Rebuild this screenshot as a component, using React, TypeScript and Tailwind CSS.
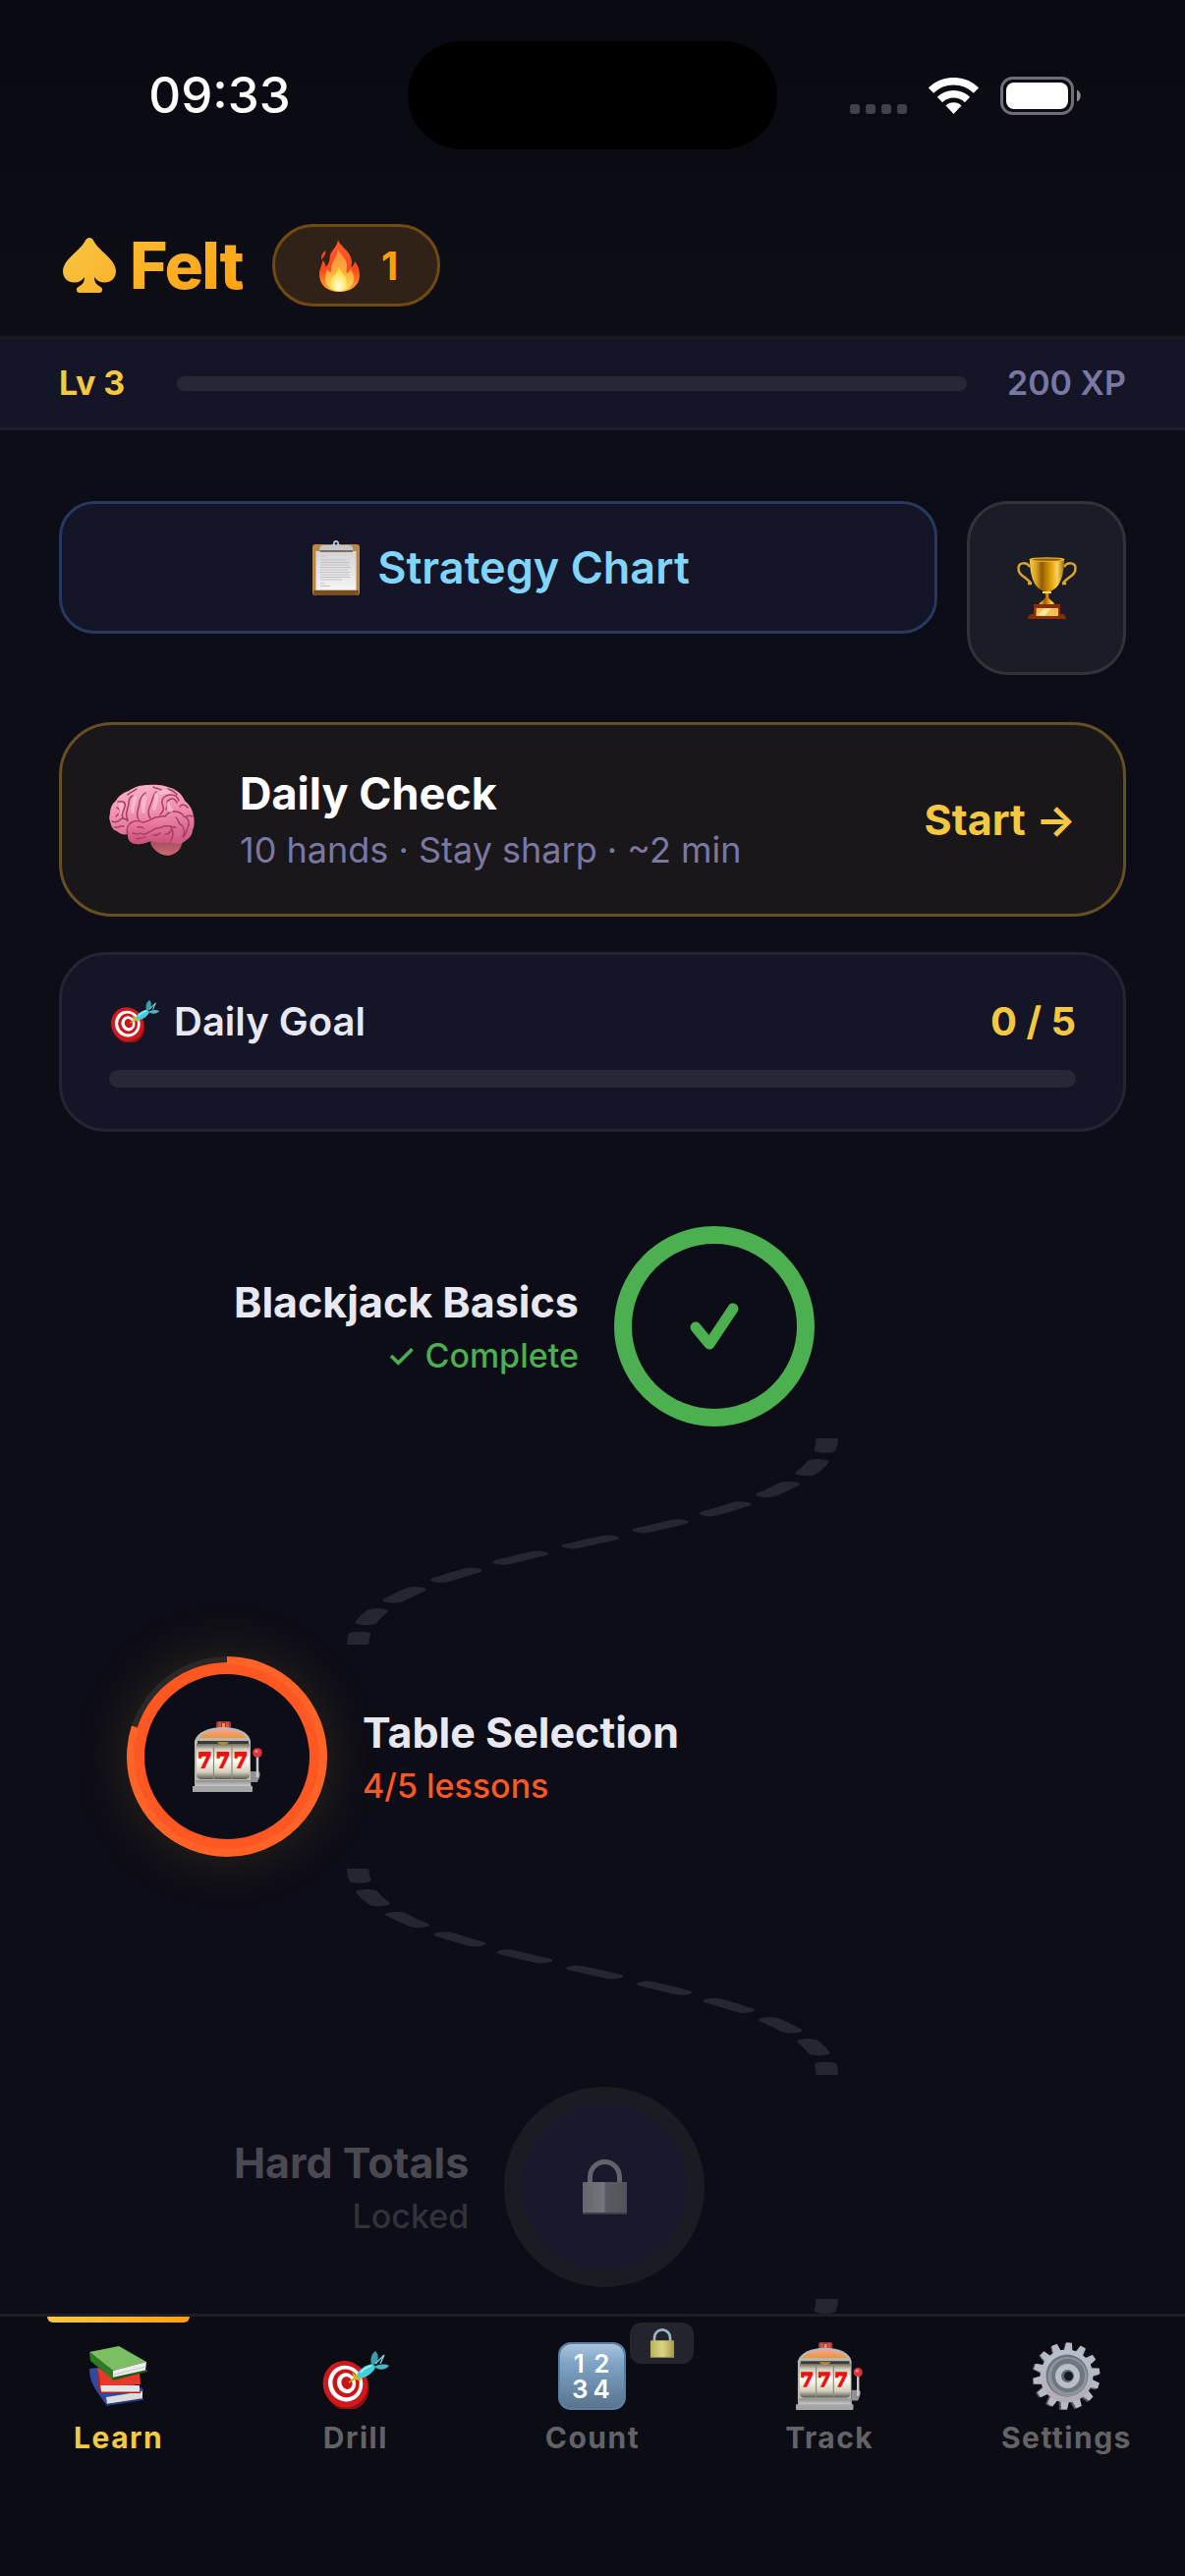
import { useState } from "react";
import type { ReactNode } from "react";
import clsx from "clsx";

type IconProps = { className?: string };

function SpadeIcon({ className }: IconProps) {
  return (
    <svg viewBox="0 0 54 56" className={className} aria-hidden="true">
      <defs>
        <linearGradient id="spade" x1="0" y1="0" x2="1" y2="1">
          <stop offset="0" stopColor="#f5c842" />
          <stop offset="1" stopColor="#fdb02a" />
        </linearGradient>
      </defs>
      <path
        fill="url(#spade)"
        d="M27 0c-2 0-3.500 1.500-4.500 3.500C18 13 0 22 0 34c0 7 5 11.500 11.500 11.500 5 0 8.500-2 10.500-5.500 0 5-2 7.500-5.500 9.500C14 51 14 51.500 14 53c0 2 1 3 3 3h20c2 0 3-1 3-3 0-1.500 0-2-2.500-3.500C34 47.500 32 45 32 40c2 3.500 5.500 5.500 10.500 5.500C49 45.500 54 41 54 34 54 22 36 13 31.500 3.500 30.500 1.500 29 0 27 0z"
      />
    </svg>
  );
}

function FlameIcon({ className }: IconProps) {
  return (
    <svg viewBox="0 0 41 53" className={className} aria-hidden="true">
      <defs>
        <linearGradient id="flame-out" x1="0" y1="0" x2="0" y2="1">
          <stop offset="0" stopColor="#ff5a2c" />
          <stop offset="0.6" stopColor="#fb4a1e" />
          <stop offset="1" stopColor="#ffb02e" />
        </linearGradient>
        <linearGradient id="flame-mid" x1="0" y1="0" x2="0" y2="1">
          <stop offset="0" stopColor="#ff8a3c" />
          <stop offset="0.6" stopColor="#ffb23c" />
          <stop offset="1" stopColor="#ffe25a" />
        </linearGradient>
        <radialGradient id="flame-in" cx="0.5" cy="0.8" r="0.6">
          <stop offset="0" stopColor="#fffde0" />
          <stop offset="1" stopColor="#ffe04a" />
        </radialGradient>
      </defs>
      <path
        fill="url(#flame-out)"
        d="M19 0c1 6 14 12 14 23 0 2-.5 4-.5 5 2-1 3-3 3.500-6 3 4 5 8 5 14 0 10-8 17-20.500 17S0 46 0 35c0-6 3-9 3.500-14 1.500 1.500 3 4 3 7 1-1 4-5 4-9 0-8 8-11 8.500-19z"
      />
      <path fill="#f2402a" d="M6 11c2 5-3 6-3.500 10C1.500 17 2 14 6 11z" />
      <path
        fill="url(#flame-mid)"
        d="M19 9c2 6 9 10 9 18 0 3-1 5 0 7 2-1 3-2 4-4 2 3 3 6 3 9 0 8-6 13.500-14.500 13.500S6 47 6 39c0-4 1-6 2-9 1 2 2 3 4 3-1-10 6-13 7-24z"
      />
      <path fill="url(#flame-in)" d="M20 28c1 5 8 8 8 16 0 5-3 8.500-8 8.500s-8.500-3.500-8.500-8.500c0-7 7-9 8.500-16z" />
    </svg>
  );
}

function ClipboardIcon({ className }: IconProps) {
  return (
    <svg viewBox="0 0 48 56" className={className} aria-hidden="true">
      <defs>
        <linearGradient id="paper" x1="0" y1="0" x2="0" y2="1">
          <stop offset="0" stopColor="#d4d4d6" />
          <stop offset="1" stopColor="#f4f4f4" />
        </linearGradient>
      </defs>
      <rect y="4" width="48" height="52" rx="3" fill="#b98847" />
      <path d="M1 51h46v2a3 3 0 0 1-3 3H4a3 3 0 0 1-3-3z" fill="#7a4f20" />
      <rect x="3.500" y="11" width="41" height="39.500" fill="url(#paper)" />
      <g stroke="#c2c2c6" strokeWidth="1">
        <path d="M8 16h6M8 20h26M8 22.500h30M8 25h29M8 27.500h31M8 30h28M8 32.500h30M8 35h29M8 37.500h30M8 40h22M8 44h5M8 46.500h10" />
      </g>
      <path d="M7.500 11V7.500C7.500 6 9 5 11 5h8c1 0 2-1 2-2 0-2 1.500-3 3-3s3 1 3 3c0 1 1 2 2 2h8c2 0 4 1 4 2.500V11z" fill="#c3c7cd" />
      <path d="M7.500 10h33.500v2H7.500z" fill="#7b6f62" />
      <circle cx="24" cy="3.200" r="1.300" fill="#1b1d2c" />
    </svg>
  );
}

function TrophyIcon({ className }: IconProps) {
  return (
    <svg viewBox="0 0 61 63" className={className} aria-hidden="true">
      <defs>
        <linearGradient id="cup">
          <stop offset="0" stopColor="#f6cc4c" />
          <stop offset="0.2" stopColor="#d99c1c" />
          <stop offset="0.35" stopColor="#8f5c06" />
          <stop offset="0.6" stopColor="#e09a06" />
          <stop offset="0.8" stopColor="#f9d45a" />
          <stop offset="1" stopColor="#a86c08" />
        </linearGradient>
      </defs>
      <g fill="none" stroke="#dca62c" strokeWidth="2.500">
        <path d="M13 10C10 5 2 5 1.500 11c-.5 8 8 9 13 16M11 27h4" />
        <path d="M48 10c3-5 11-5 11.500 1 .5 8-8 9-13 16M50 27h-4" />
      </g>
      <path d="M13 2c0 14 3 30 15 33h5C45 32 48 16 48 2z" fill="url(#cup)" />
      <ellipse cx="30.500" cy="2.500" rx="18" ry="2.300" fill="#edb838" />
      <ellipse cx="30.500" cy="2.600" rx="15" ry="1.200" fill="#8f5c08" />
      <path d="M28 34h5l-1 6c0 4 6 5 7 9H22c1-4 7-5 7-9z" fill="url(#cup)" />
      <path d="M26 35h9v2h-9z" fill="#ffd95c" />
      <path d="M17 48h27v10h2c2 0 4 2 4 5H11c0-3 2-5 4-5h2z" fill="#8a2c08" />
      <path d="M19.500 52h22.500v8H19.500z" fill="#f3c254" />
      <path d="M21 59l7-7h7l-7 8z" fill="#ffe79a" />
    </svg>
  );
}

function BrainIcon({ className }: IconProps) {
  return (
    <svg viewBox="0 0 88 73" className={className} aria-hidden="true">
      <defs>
        <linearGradient id="brain" x1="0.3" y1="0" x2="0.5" y2="1">
          <stop offset="0" stopColor="#f7b3c8" />
          <stop offset="0.5" stopColor="#f18cae" />
          <stop offset="1" stopColor="#cf5a86" />
        </linearGradient>
        <linearGradient id="lobe" x1="0" y1="0" x2="0" y2="1">
          <stop offset="0" stopColor="#f386a6" />
          <stop offset="1" stopColor="#c94f7a" />
        </linearGradient>
        <linearGradient id="stem" x1="0" y1="0" x2="0" y2="1">
          <stop offset="0" stopColor="#a04a5c" />
          <stop offset="1" stopColor="#cc6b72" />
        </linearGradient>
      </defs>
      <path d="M42 57c0 5 3 9 7 12 5 4 12 5 17 2 5-2 8-7 9-13z" fill="url(#stem)" />
      <path
        fill="url(#brain)"
        d="M40 1C32 1 26 3 20 7 14 9 9 13 7 17 3 20 1 25 1 30c-1 3-1 6 0 8 1 5 3 9 7 10 3 3 7 4 11 3 0 6 4 10 9 10 6 1 10-2 15-3 6 2 13 2 19 1 5 2 10 3 14 0 5-3 9-7 9-12 2-4 2-10 1-14-1-7-4-12-9-16C74 10 69 6 63 4 56 1 48 0 40 1z"
      />
      <path
        fill="url(#lobe)"
        d="M19 52c-2-4-1-9 2-11 3-3 7-4 11-3 4 2 8 2 12 0 5-3 9-4 13-5 4 1 7 5 9 10 2 6 0 12-4 16-6 1-13 1-19-1-5 1-9 4-15 3-5 0-9-3-9-9z"
      />
      <g fill="none" stroke="#a63f66" strokeWidth="1.500" strokeLinecap="round">
        <path d="M19 51c-2-5 0-10 4-12 4-2 8-2 11 0 5 0 9-3 13-5 4 0 7-2 10-1 2-3 5-5 9-5" />
        <path d="M24 50c3 1 5 2 8 0 3 2 6 1 8-1 4-1 6-4 9-4 4 0 6-3 10-2 4-1 6 2 9 1" />
        <path d="M29 44c2 0 4-1 6 1M28 56c4-2 6 0 9-2M45 52c3 1 5-1 7-2M57 51c3 0 5-1 6-4" />
        <path d="M19 36c-4-6 1-11 1-17 0-4 2-6 4-7M30 36c-4-7 1-11 1-18 1-4 3-7 6-9" />
        <path d="M42 35c-4-6-1-11 1-16 2-5 1-8 5-11M52 31c4-3 4-7 2-11-1-6 4-9 9-9 4 0 7 2 8 6" />
        <path d="M58 26c2-4-1-8 3-10 3-2 7-1 8 3M66 28c4 0 8 1 10 5 4 1 6 5 5 9M72 23c2-3 6-2 8 1" />
        <path d="M68 34c3 2 2 7 6 8 3 3 3 8 1 12M63 44c3 5 2 10 0 14M81 42c-2 4-2 8-5 12M79 33c2-1 4-1 6 0" />
        <path d="M8 24c5 2 2 7-1 9M3 38c4 2 8-1 10-3 3 0 5 1 6 3M6 44c3 1 6-2 9-1M9 18c5-1 8 0 7 5-1 4-4 7-2 11" />
        <path d="M28 5c-3 3-7 3-9 6M45 3c2 2 6 1 8 3M60 5c4 1 7 3 9 6" />
      </g>
      <g fill="none" stroke="#ffd3e0" strokeWidth="4" strokeLinecap="round" opacity="0.5">
        <path d="M26 14c0 5-3 9-2 14M36 14c0 5-2 9-1 14M48 11c1 5-1 9-2 14M13 21c-1 3-1 5-2 8M60 20c0 3 1 5 3 7M53 9c2-1 5-2 7-1" />
      </g>
    </svg>
  );
}

function TargetIcon({ className }: IconProps) {
  return (
    <svg viewBox="0 0 69 59" className={className} aria-hidden="true">
      <g transform="rotate(-22 25 34)">
        <ellipse cx="25" cy="36" rx="22.500" ry="25" fill="#8d1113" />
        <ellipse cx="24.500" cy="33.500" rx="22.500" ry="24" fill="#d0191c" />
        <ellipse cx="25" cy="33" rx="17.500" ry="18.500" fill="#fff" />
        <ellipse cx="25.500" cy="33" rx="13.500" ry="14.500" fill="#c8171a" />
        <ellipse cx="26" cy="33" rx="9.500" ry="10.500" fill="#fff" />
        <ellipse cx="26.500" cy="33" rx="5.500" ry="6.500" fill="#c8171a" />
      </g>
      <path d="M28 32l12-8" stroke="#c99b12" strokeWidth="1.600" />
      <path d="M33 24l7 5-6-1z" fill="#f0d020" stroke="#d9b40c" strokeWidth="2" />
      <path d="M36 24c3-6 9-10 17-11l2 4c-3 6-9 10-17 11z" fill="#45cfdc" />
      <path d="M51 14C49 7 52 2 55 0c3 3 4 7 1 13z" fill="#3a9ea8" />
      <path d="M54 16c5-3 11-3 15-1-3 4-9 5-14 2z" fill="#4fb4bd" />
      <path d="M55 13l9-9-4 9" stroke="#7fd0d8" strokeWidth="1.400" fill="none" />
      <path d="M40 22c3-4 7-6 11-7" stroke="#a9f3f8" strokeWidth="1.500" fill="none" />
    </svg>
  );
}

function SlotIcon({ className }: IconProps) {
  return (
    <svg viewBox="0 0 71 72" className={className} aria-hidden="true">
      <defs>
        <linearGradient id="reel" x1="0" y1="0" x2="0" y2="1">
          <stop offset="0" stopColor="#6f6c5e" />
          <stop offset="0.15" stopColor="#cfccba" />
          <stop offset="0.45" stopColor="#fffef2" />
          <stop offset="0.8" stopColor="#d2cfbe" />
          <stop offset="1" stopColor="#5c594c" />
        </linearGradient>
        <linearGradient id="dome" x1="0" y1="0" x2="0" y2="1">
          <stop offset="0" stopColor="#ff9d90" />
          <stop offset="1" stopColor="#e69a35" />
        </linearGradient>
        <linearGradient id="slot-base" x1="0" y1="0" x2="0" y2="1">
          <stop offset="0" stopColor="#8c8c8c" />
          <stop offset="0.5" stopColor="#c9c9c9" />
          <stop offset="1" stopColor="#808080" />
        </linearGradient>
      </defs>
      <rect x="24" width="15" height="8" rx="2" fill="#8f3f42" />
      <rect x="26" y="1" width="3" height="6" fill="#d8504a" />
      <rect x="34" y="1" width="3" height="6" fill="#d8504a" />
      <rect x="30" y="2" width="3" height="5" fill="#ff8a3c" />
      <path d="M2 20C5 11 16 6 31 6s26 5 28 14v44H2z" fill="#b9b9b7" />
      <path d="M6 17c5-6 14-8.500 25-8.500S51 11 55 17z" fill="url(#dome)" />
      <path d="M5 20h52v3H5z" fill="#3b3a36" />
      <path d="M4 23h54v33c-2 3-4 3-6 3H10c-2 0-4 0-6-3z" fill="url(#reel)" />
      <path d="M25 21h12c-2 4-10 4-12 0z" fill="#b48a34" />
      <path d="M21.500 24v35M40 24v35" stroke="#8d8a7c" strokeWidth="1.200" />
      <g
        fill="#ee1111"
        stroke="#ee1111"
        strokeWidth="1.800"
        fontFamily="'DejaVu Serif', serif"
        fontWeight="700"
        fontSize="20"
        textAnchor="middle"
      >
        <text x="12.500" y="47">7</text>
        <text x="31" y="47">7</text>
        <text x="49" y="47">7</text>
      </g>
      <path d="M3 60h56l1 12H1z" fill="url(#slot-base)" />
      <path d="M0 66h61v5c0 1-1 1-1 1H1c-1 0-1 0-1-1z" fill="#a5a7a7" />
      <path d="M59 51h7c3 0 3 3 2 6l-2 5h-7z" fill="#8f9292" />
      <path d="M66 32v25" stroke="#c9c9cb" strokeWidth="2.500" />
      <circle cx="66" cy="32" r="4.800" fill="#e0343c" />
      <circle cx="65" cy="30.500" r="1.500" fill="#ff8d92" />
    </svg>
  );
}

function LockIcon({ className, muted }: IconProps & { muted?: boolean }) {
  return (
    <svg viewBox="0 0 45 56" className={className} aria-hidden="true">
      <defs>
        <linearGradient id="lock-gold">
          <stop offset="0" stopColor="#b7b05a" />
          <stop offset="0.5" stopColor="#dcd684" />
          <stop offset="1" stopColor="#a39a48" />
        </linearGradient>
        <linearGradient id="lock-grey">
          <stop offset="0" stopColor="#66666f" />
          <stop offset="0.48" stopColor="#75757d" />
          <stop offset="0.52" stopColor="#5b5b64" />
          <stop offset="1" stopColor="#53535c" />
        </linearGradient>
      </defs>
      <path
        d="M7.500 26V18a15 15.500 0 0 1 30 0v8"
        fill="none"
        stroke={muted ? "#63636c" : "#9db4c8"}
        strokeWidth="5"
      />
      <rect y="23" width="45" height="33" rx="1" fill={muted ? "url(#lock-grey)" : "url(#lock-gold)"} />
      <path d="M0 54h45v2H0z" fill={muted ? "#3c3c48" : "#8b8340"} />
    </svg>
  );
}

function BooksIcon({ className }: IconProps) {
  return (
    <svg viewBox="0 0 59 61" className={className} aria-hidden="true">
      <path d="M0 23l8-1 46 21 1 3-38 14C10 48 0 40 0 23z" fill="#2f4a9e" />
      <path d="M17 52l37-6v8l-36 5z" fill="#dcdcdc" />
      <path d="M17 59l38-6v2l-38 6z" fill="#23397f" />
      <path d="M8 22l20 8 23-4 1 13-42 2z" fill="#e8382a" />
      <path d="M10 40h41v7H11z" fill="#e4e4e4" />
      <path d="M8 22l2 26h42v-1.500H12L10 30z" fill="#b32018" />
      <path d="M0 6L30 0l28 16-34 9z" fill="#7cbf63" />
      <path d="M0 6l24 19v9L1 15z" fill="#2f7d22" />
      <path d="M24 25l34-9-1 9-33 8z" fill="#ececec" />
      <path d="M23 32l36-8v2l-35 9z" fill="#1f5e17" />
      <path d="M25 29l32-8" stroke="#bdbdbd" strokeWidth="0.800" />
    </svg>
  );
}

function NumbersIcon({ className }: IconProps) {
  return (
    <svg viewBox="0 0 69 69" className={className} aria-hidden="true">
      <defs>
        <linearGradient id="tile" x1="0" y1="0" x2="0" y2="1">
          <stop offset="0" stopColor="#a9c3dc" />
          <stop offset="0.3" stopColor="#7fa4c6" />
          <stop offset="1" stopColor="#58748e" />
        </linearGradient>
      </defs>
      <rect width="69" height="69" rx="13" fill="#5d7f9f" />
      <rect x="2" y="2" width="65" height="65" rx="12" fill="url(#tile)" />
      <g fill="#fff" fontFamily="Inter, sans-serif" fontWeight="600" fontSize="26" textAnchor="middle">
        <text x="22" y="31">1</text>
        <text x="45" y="31">2</text>
        <text x="23" y="57">3</text>
        <text x="45" y="57">4</text>
      </g>
    </svg>
  );
}

const TEETH = Array.from({ length: 14 }, (_, i) => i * (360 / 14) + 5);

function GearIcon({ className }: IconProps) {
  return (
    <svg viewBox="0 0 69 69" className={className} aria-hidden="true">
      <defs>
        <linearGradient id="gear" x1="0" y1="0" x2="0" y2="1">
          <stop offset="0" stopColor="#b5c3cf" />
          <stop offset="1" stopColor="#b3abb5" />
        </linearGradient>
      </defs>
      {TEETH.map((deg) => (
        <path key={deg} d="M29.500 11l1.500-10.500h6L38.500 11z" fill="#5d5754" transform={`translate(-1 .8) rotate(${deg} 34 34.500)`} />
      ))}
      {TEETH.map((deg) => (
        <path key={deg} d="M29.500 11l1.500-10.500h6L38.500 11z" fill="#b5bac4" transform={`rotate(${deg} 34.500 34.500)`} />
      ))}
      <circle cx="34.500" cy="34.500" r="27" fill="url(#gear)" />
      <circle cx="35" cy="34" r="21.500" fill="#6f767d" />
      <circle cx="35.500" cy="35" r="20" fill="#8d949b" />
      <circle cx="36" cy="34" r="17" fill="#70767d" />
      <circle cx="35.500" cy="34.500" r="12.500" fill="#b9bfc9" />
      <circle cx="35.500" cy="34.500" r="6.500" fill="#5d646c" />
      <circle cx="36.500" cy="34.500" r="4.500" fill="#16171f" />
    </svg>
  );
}

function StatusBar() {
  return (
    <div className="grid grid-cols-[1fr_376px_1fr] items-center pt-[42px]">
      <div className="pl-8 text-center text-[51px] leading-[60px] font-medium text-white">09:33</div>
      <div className="h-[110px] rounded-full bg-black" />
      <div className="flex items-center justify-center gap-[22px] pr-8">
        <svg viewBox="0 0 58 39" className="h-[39px] w-[58px]" aria-hidden="true">
          <g fill="#414148">
            <rect y="28" width="10" height="10" rx="3" />
            <rect x="16" y="28" width="10" height="10" rx="3" />
            <rect x="32" y="28" width="10" height="10" rx="3" />
            <rect x="48" y="28" width="10" height="10" rx="3" />
          </g>
        </svg>
        <svg viewBox="0 0 51 37" className="h-[37px] w-[51px]" aria-hidden="true">
          <g fill="none" stroke="#fff">
            <path d="M2.500 13a33 33 0 0 1 46 0" strokeWidth="7.500" />
            <path d="M11.500 22.500a20 20 0 0 1 28 0" strokeWidth="7.500" />
          </g>
          <path d="M25.500 37l-8-8.500a11.500 11.500 0 0 1 16 0z" fill="#fff" />
        </svg>
        <svg viewBox="0 0 83 39" className="h-[39px] w-[83px]" aria-hidden="true">
          <rect x="1.500" y="1.500" width="72" height="36" rx="11" fill="none" stroke="#6e6e74" strokeWidth="3" />
          <rect x="6" y="6" width="63" height="27" rx="8" fill="#fff" />
          <path d="M78 13.500c5 2 5 10 0 12z" fill="#8a8a90" />
        </svg>
      </div>
    </div>
  );
}

function Connector({ flip }: { flip?: boolean }) {
  return (
    <svg viewBox="0 0 100 70" preserveAspectRatio="none" className="h-[210px] w-full shrink-0" aria-hidden="true">
      <path
        d={flip ? "M30.200 0C30.200 35 69.800 35 69.800 70" : "M69.800 0C69.800 35 30.200 35 30.200 70"}
        fill="none"
        stroke="#262630"
        strokeWidth="1.850"
        strokeDasharray="4 4"
        strokeLinecap="round"
      />
    </svg>
  );
}

function LessonText({ title, note, className, right }: { title: string; note: ReactNode; className: string; right?: boolean }) {
  return (
    <span className={clsx("flex flex-col gap-2", right ? "items-end" : "items-start", className)}>
      <span className="text-[43px] leading-[51px] font-bold">{title}</span>
      {note}
    </span>
  );
}

const TABS = [
  { id: "learn", label: "Learn", icon: <BooksIcon className="h-[61px] w-[59px]" /> },
  { id: "drill", label: "Drill", icon: <TargetIcon className="mt-2 h-[59px] w-[69px]" /> },
  { id: "count", label: "Count", icon: <NumbersIcon className="size-[69px]" />, locked: true },
  { id: "track", label: "Track", icon: <SlotIcon className="h-[69px] w-[68px]" /> },
  { id: "settings", label: "Settings", icon: <GearIcon className="size-[69px]" /> },
];

export default function App() {
  const [tab, setTab] = useState("learn");

  return (
    <div className="flex h-screen flex-col overflow-hidden bg-[#0d0d17] font-['Inter',sans-serif]">
      <header className="shrink-0 bg-linear-to-b from-[#090912] to-[#0e0e17]">
        <StatusBar />
        <div className="flex items-center gap-[30px] border-b-3 border-[#1a1a21] px-[60px] pt-[76px] pb-[30px]">
          <h1 className="flex items-center gap-3.5 pl-1">
            <SpadeIcon className="h-[56px] w-[54px]" />
            <span className="bg-linear-to-br from-[#f9bb30] to-[#ff9f0a] bg-clip-text text-[66px] leading-[72px] font-extrabold tracking-tight text-transparent">
              Felt
            </span>
          </h1>
          <div className="flex h-[84px] items-center gap-[22px] rounded-[42px] border-3 border-[#714a12] bg-[#302216] pr-10 pl-[45px]">
            <FlameIcon className="h-[53px] w-[41px]" />
            <span className="text-[40px] leading-[51px] font-bold text-[#ff9f0a]">1</span>
          </div>
        </div>
      </header>

      <section aria-label="Level" className="flex h-[93px] shrink-0 items-center gap-9 border-b-3 border-[#1e1e31] bg-[#151528] px-[60px]">
        <span className="min-w-[84px] text-[34px] leading-[42px] font-bold text-[#f5c842]">Lv 3</span>
        <div className="h-[15px] flex-1 rounded-full bg-[#272738]" />
        <span className="min-w-[126px] text-right text-[34px] leading-[42px] font-semibold text-[#7a78a3]">200 XP</span>
      </section>

      <main className="flex min-h-0 flex-1 flex-col overflow-hidden pt-[72px]">
        <div className="flex shrink-0 flex-col px-[60px]">
          <div className="flex items-start gap-[30px]">
            <button className="flex h-[135px] flex-1 items-center justify-center gap-[18px] rounded-[36px] border-3 border-[#28395f] bg-[#151528] pl-1.5">
              <ClipboardIcon className="h-[56px] w-[48px]" />
              <span className="text-[45px] leading-[54px] font-semibold text-[#81d4fa]">Strategy Chart</span>
            </button>
            <button aria-label="Achievements" className="flex h-[177px] w-[162px] items-center justify-center rounded-[42px] border-3 border-[#32323b] bg-[#1c1c26]">
              <TrophyIcon className="h-[63px] w-[61px]" />
            </button>
          </div>

          <button className="mt-12 flex h-[198px] items-center rounded-[54px] border-3 border-[#665023] bg-[#1a171a] px-12 text-left">
            <BrainIcon className="h-[73px] w-[88px]" />
            <span className="ml-[45px] flex flex-1 flex-col gap-2">
              <span className="text-[45px] leading-[54px] font-bold text-white">Daily Check</span>
              <span className="text-[36px] leading-[44px] text-[#7a78a3]">10 hands · Stay sharp · ~2 min</span>
            </span>
            <span className="text-[43px] leading-[51px] font-bold text-[#f5c842]">Start →</span>
          </button>

          <section className="mt-9 rounded-[48px] border-3 border-[#242435] bg-[#151528] px-12 py-[42px]">
            <div className="flex items-center justify-between text-[40px] leading-[51px]">
              <h2 className="flex items-center gap-3.5 font-semibold text-[#e8e8f2]">
                <TargetIcon className="h-[43px] w-[52px]" />
                Daily Goal
              </h2>
              <span className="font-bold text-[#f5c842]">0 / 5</span>
            </div>
            <div className="mt-6 h-[18px] rounded-full bg-[#272738]" />
          </section>
        </div>

        <div className="mt-24 flex flex-col gap-3">
          <button className="flex items-center gap-9 pl-[238px]">
            <LessonText
              right
              title="Blackjack Basics"
              className="text-[#e8e8f2]"
              note={<span className="text-[34px] leading-[42px] font-medium text-[#4caf50]">✓ Complete</span>}
            />
            <span className="flex size-[204px] items-center justify-center rounded-full border-18 border-[#4caf50]">
              <svg viewBox="0 0 50 48" className="h-[48px] w-[50px]" aria-hidden="true">
                <path d="M6 25l14 17L44 6" fill="none" stroke="#4caf50" strokeWidth="11" strokeLinecap="round" strokeLinejoin="round" />
              </svg>
            </span>
          </button>

          <Connector />

          <button className="flex items-center gap-9 pl-[129px]">
            <span className="grid size-[204px] place-items-center rounded-full shadow-[0_0_60px_rgba(245,200,66,0.14)]">
              <svg viewBox="0 0 204 204" className="col-start-1 row-start-1 size-[204px]" aria-hidden="true">
                <circle cx="102" cy="102" r="99" fill="#0d0d17" stroke="#2b2828" strokeWidth="6" />
                <circle cx="102" cy="102" r="90" fill="none" stroke="#ff5722" strokeWidth="12" />
                <circle
                  cx="102"
                  cy="102"
                  r="98"
                  fill="none"
                  stroke="#ff6327"
                  strokeWidth="8"
                  pathLength="100"
                  strokeDasharray="80 20"
                  transform="rotate(-90 102 102)"
                />
              </svg>
              <SlotIcon className="col-start-1 row-start-1 h-[72px] w-[71px]" />
            </span>
            <LessonText
              title="Table Selection"
              className="text-[#e8e8f2]"
              note={<span className="text-[34px] leading-[42px] font-medium text-[#ff5722]">4/5 lessons</span>}
            />
          </button>

          <Connector flip />

          <button className="flex items-center gap-9 pl-[238px]">
            <LessonText
              right
              title="Hard Totals"
              className="text-[#494952]"
              note={<span className="text-[34px] leading-[42px] font-medium text-[#32323b]">Locked</span>}
            />
            <span className="flex size-[204px] items-center justify-center rounded-full border-18 border-[#1b1b24] bg-[#19192d]">
              <LockIcon muted className="h-[56px] w-[45px]" />
            </span>
          </button>

          <Connector />
        </div>
      </main>

      <nav className="grid shrink-0 grid-cols-5 border-t-3 border-[#1e1e27] bg-[#0c0c15] pb-[102px]">
        {TABS.map((t) => (
          <a
            key={t.id}
            href={`#${t.id}`}
            onClick={() => setTab(t.id)}
            className={clsx(
              "relative flex h-[162px] flex-col items-center gap-2.5 pt-[26px] text-[30px] leading-9 font-bold tracking-wider",
              tab === t.id ? "text-[#f5c842]" : "text-[#636366]"
            )}
          >
            {tab === t.id && (
              <span className="absolute top-0 left-1/5 h-1.5 w-3/5 rounded-b-md bg-linear-to-r from-[#f5c842] to-[#ff9f0a]" />
            )}
            <span className="flex h-[69px] items-center justify-center">{t.icon}</span>
            {t.locked && (
              <span className="absolute top-1.5 left-[159px] flex h-[42px] w-[65px] items-center justify-center rounded-xl bg-[#24242d]">
                <LockIcon className="h-[30px] w-[26px]" />
              </span>
            )}
            {t.label}
          </a>
        ))}
      </nav>
    </div>
  );
}
